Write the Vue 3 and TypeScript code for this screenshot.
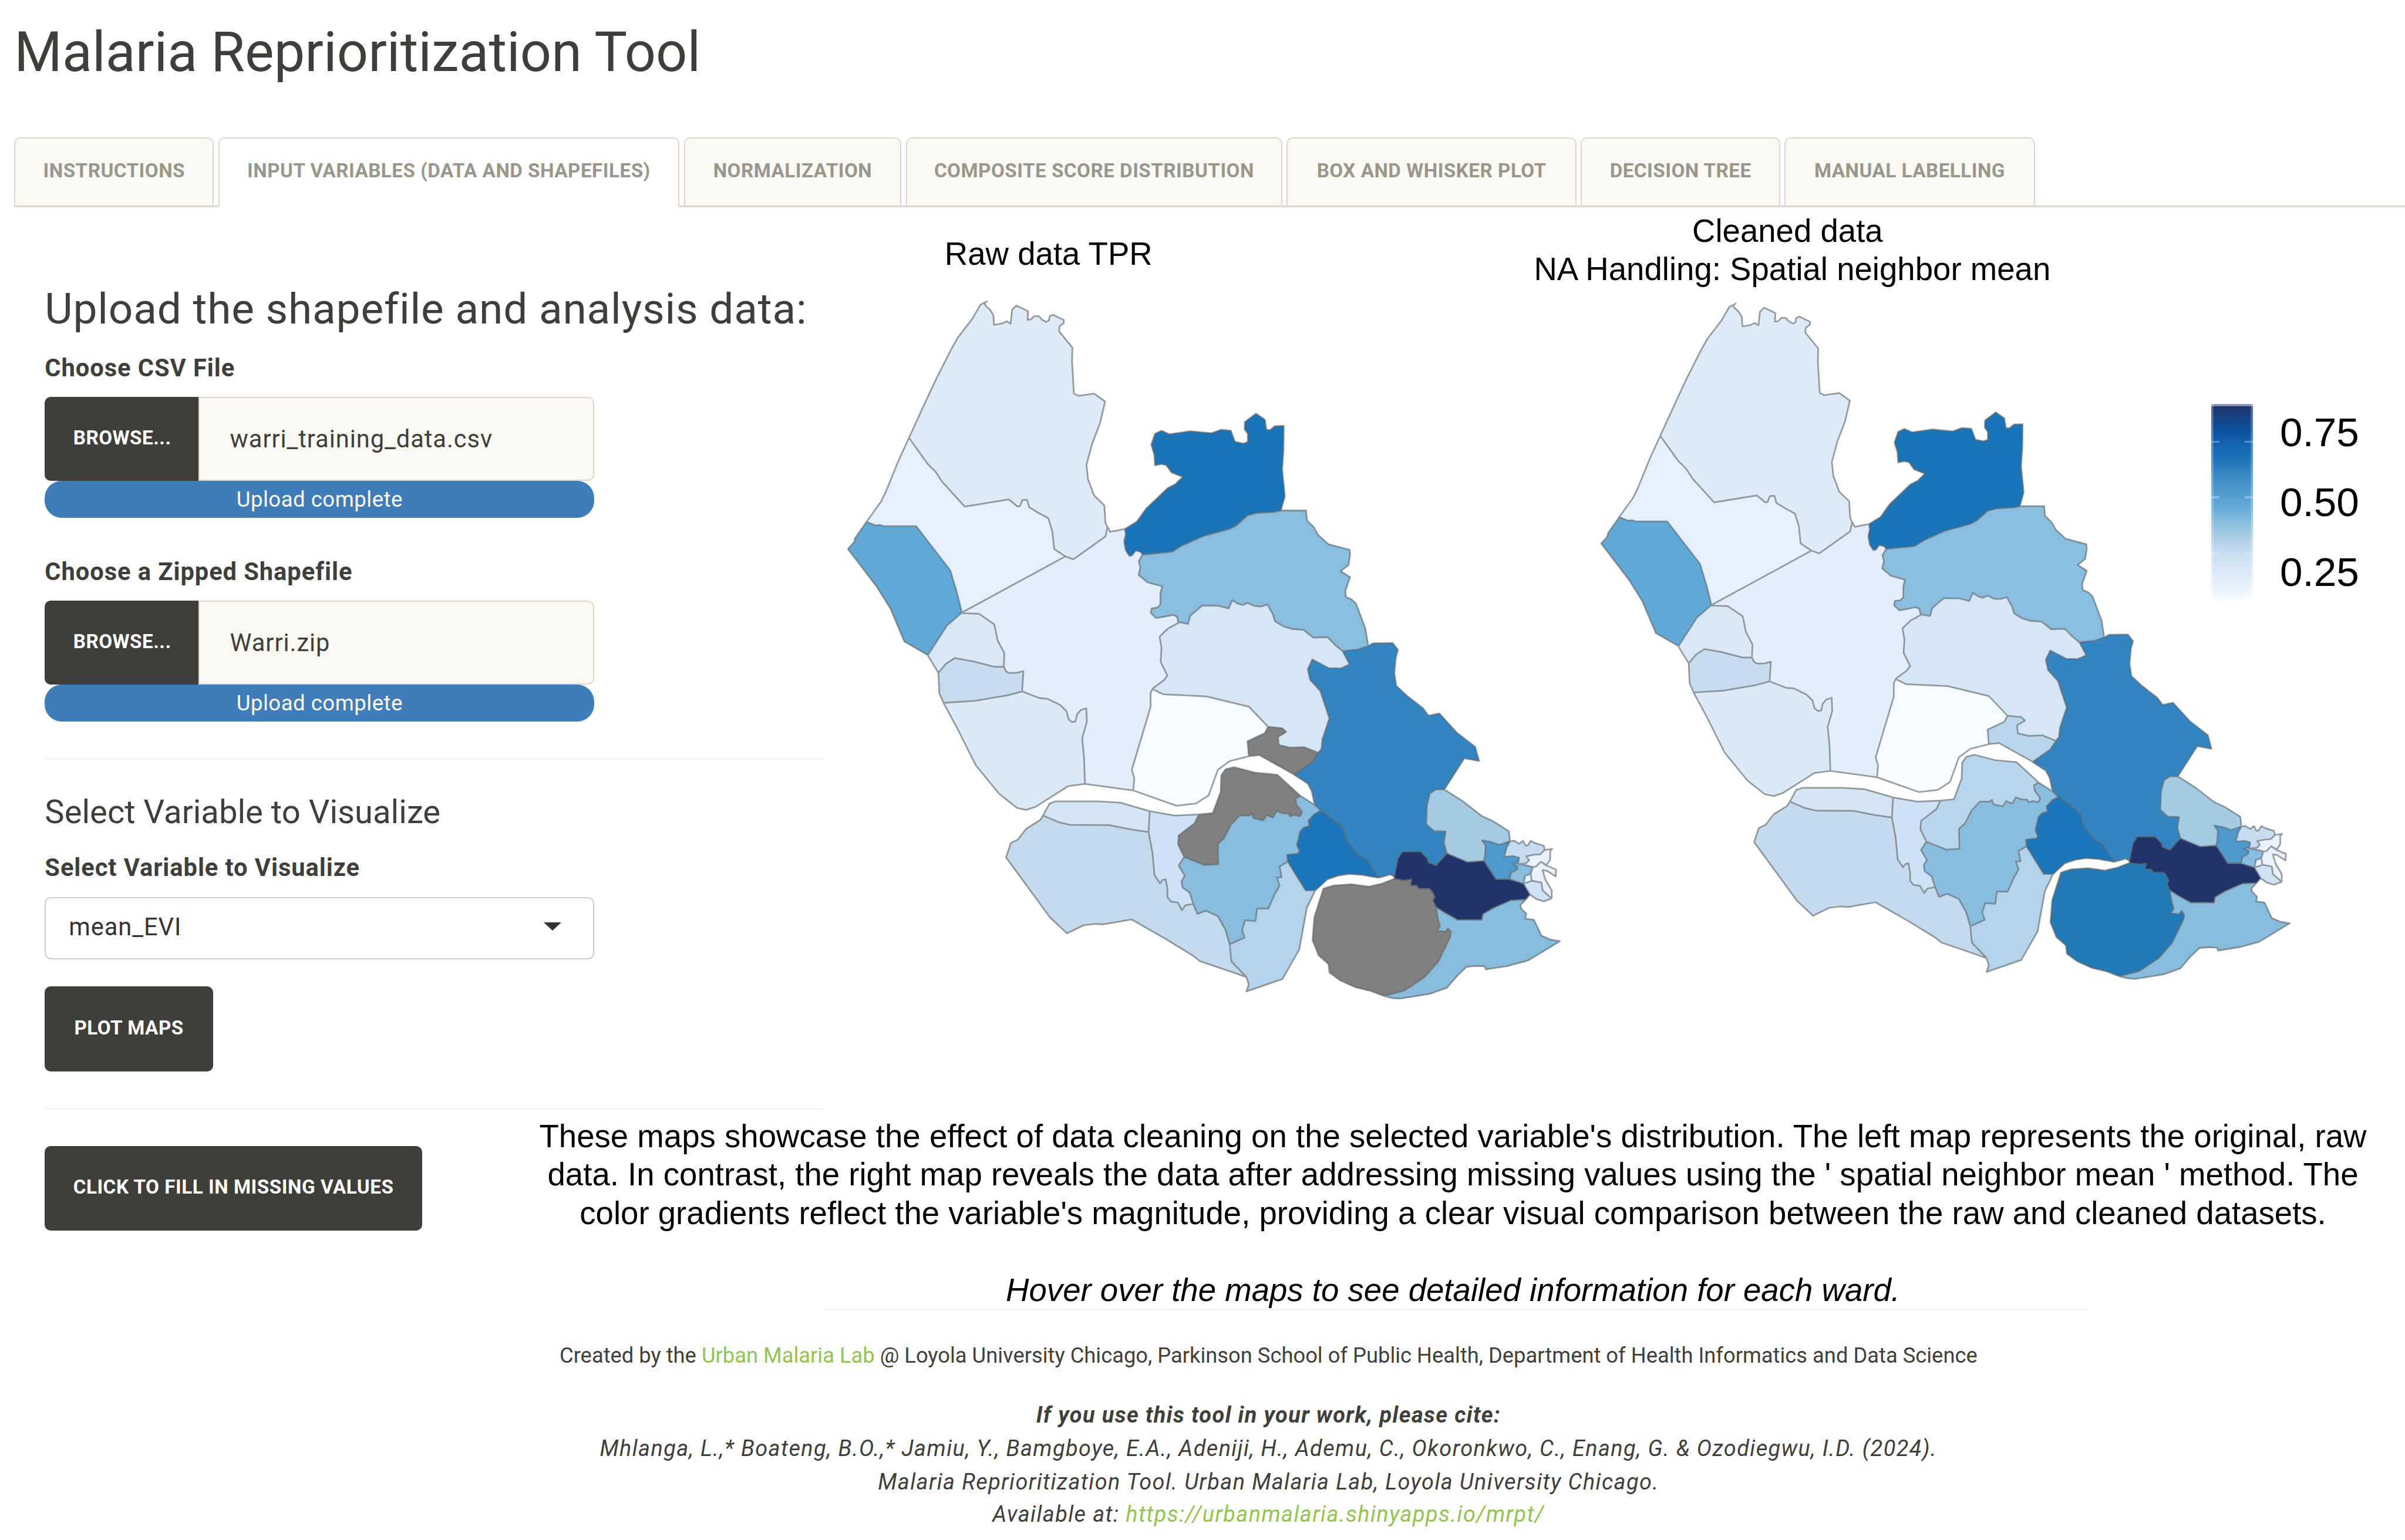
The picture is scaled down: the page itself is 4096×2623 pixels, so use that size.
<script setup lang="ts">
interface Sheet { x: number; y: number; sx: number; sy: number }
interface Ward { arcs: string; raw: string; cleaned?: string }

const tabs = [
  { label: 'Instructions', width: 36.3 },
  { label: 'Input variables (data and shapefiles)', width: 83.9, active: true },
  { label: 'Normalization', width: 39.6 },
  { label: 'Composite score distribution', width: 68.5 },
  { label: 'Box and whisker plot', width: 52.7 },
  { label: 'Decision tree', width: 36.3 },
  { label: 'Manual labelling', width: 45.5 },
]

const uploads = [
  { label: 'Choose CSV File', file: 'warri_training_data.csv' },
  { label: 'Choose a Zipped Shapefile', file: 'Warri.zip' },
]

const legend = ['0.75', '0.50', '0.25']

// The ward boundaries are digitised on four overlapping sheets.
const sheets: Record<string, Sheet> = {
  A: { x: 1520, y: 520, sx: 2.0632, sy: 2.24 },
  B: { x: 2000, y: 700, sx: 2.0632, sy: 2.24 },
  C: { x: 1660, y: 1060, sx: 1.96, sy: 2.0103 },
  D: { x: 2260, y: 1140, sx: 2.529, sy: 2.24 },
}

// Every boundary arc is stored once and shared by the wards on its two sides.
const arcSource: Record<string, string> = {
  a1: 'A 275,620 330,490 378,378 432,262 458,212 512,136 543,78 568,64 558,70 563,82 578,96 592,120 594,160 625,154 642,145 656,155 662,98 678,81 722,104 720,139 732,138 745,124 762,124 774,138 790,148 800,142 803,124 816,119 856,140 856,152 840,166 838,186 888,252 887,310 894,440 912,449 970,440 1011,472 992,560 962,645 941,730 947,790 970,855 1008,895 1012,965 1020,985',
  a2: 'A 1020,985 1012,1022 892,1115 862,1103',
  a3: 'A 862,1103 820,1073 813,1000 798,948 760,925 726,903 718,872 700,874 692,898 683,900 650,871 484,900 400,800 375,758 345,726 275,620',
  a4: 'A 275,620 235,715 190,835 170,880 116,962',
  a5: 'A 116,962 150,977 166,975 180,980 302,980 430,1160 455,1250 474,1332',
  a6: 'A 474,1332 862,1103',
  a7: 'A 116,962 72,1030 70,1044 46,1073 155,1228 205,1315 258,1450 346,1505',
  a8: 'A 474,1332 418,1384 346,1505',
  a9: 'C 176,112 236,114 291,153 303,212 327,258 325,308',
  a10: 'C 325,308 290,308 215,288 150,276 118,298 92,330',
  a11: 'C 54,267 92,330',
  a12: 'C 325,308 333,325 345,331 372,330 395,324 390,398',
  a13: 'C 390,398 340,412 220,433 110,440',
  a14: 'C 92,330 95,405 110,440',
  a15: 'C 390,398 450,422 480,425 525,447 548,470 556,500 568,510 580,508 586,482 600,466 619,460 621,510 604,570 611,640 614,736',
  a16: 'C 110,440 160,535 225,668 308,772 372,824 405,831 438,820 555,744 614,736',
  a17: 'C 614,736 786,760',
  a18: 'C 786,760 790,715 781,685 848,455 848,405 855,388',
  a19: 'C 855,388 895,358 908,340 884,290 887,240 880,198 910,168 948,147',
  a20: 'B 295,968 290,945 275,938 245,945 212,951 192,930 195,912 218,908 228,895 228,850 235,822 180,806 146,775 153,745 147,720 161,693',
  a21: 'B 161,693 155,682 135,676 122,695 112,698 98,675 92,640 98,610 95,588',
  a22: 'B 95,588 40,600 30,580',
  a23: 'B 95,588 140,558 175,505 255,422 285,405 312,376 270,358 250,328 232,324 208,329 205,285 194,245 208,200 232,188 262,202 340,190 420,198 455,184 492,187 508,233 540,240 556,233 556,200 544,182 545,152 587,118 620,143 626,184 640,185 658,169 691,168 690,270 685,345 695,455 680,513',
  a24: 'B 680,513 655,519 590,523 555,533 515,572 490,587 390,617 310,655 272,681 161,693',
  a25: 'B 680,513 775,513 778,553 805,583 820,612 858,650 938,673 940,692 934,735 905,760 940,785 922,840 924,865 945,875 962,892 997,992 1008,1065',
  a26: 'B 1008,1065 970,1079 912,1086',
  a27: 'B 912,1086 885,1062 855,1029 802,1031 765,999 722,996 690,985 658,964 650,935 630,896 605,904 580,902 555,889 538,898 520,893 498,878 484,912 445,901 385,900 340,942 332,975 295,968',
  a28: 'B 912,1086 938,1140 905,1156 860,1155 798,1120 781,1160 790,1203 828,1248 862,1360 836,1445 832,1485 820,1500',
  a29: 'B 820,1500 768,1477 715,1479 672,1468 670,1435 700,1415 685,1400 632,1394',
  a30: 'B 632,1394 560,1312 400,1270 240,1262 197,1240',
  a31: 'B 632,1394 620,1420 555,1453 560,1515',
  a32: 'C 1198,635 1130,653 1088,685 1055,778 1010,808 940,816 786,760',
  a33: 'C 1198,635 1236,631 1360,702',
  a34: 'C 1360,702 1425,655 1445,624',
  a35: 'D 237,604 300,640 318,670 332,727',
  a36: 'D 332,727 360,750',
  a37: 'D 360,750 430,795 466,825 476,868 530,930 570,950 625,1024',
  a38: 'D 625,1024 680,1010 698,1020',
  a39: 'D 698,1020 715,945 735,918 820,918 850,945 855,962 890,974 940,925',
  a40: 'D 940,925 926,880 934,835 880,833 845,805 848,730 862,680 890,664 928,664',
  a41: 'D 578,80 600,68 690,67 715,95 705,125 698,190 707,242 760,285 830,333 855,363 905,354 985,432 1070,490 1088,548 1020,537 928,664',
  a42: 'D 928,664 1010,710 1100,772 1150,792 1225,834 1230,875',
  a43: 'D 1230,875 1180,890 1145,878 1102,871 1118,892 1115,935 1110,955',
  a44: 'D 940,925 1035,960 1110,955',
  a45: 'D 1110,955 1165,1030 1228,1030',
  a46: 'D 1228,1030 1292,1048',
  a47: 'D 1292,1048 1322,1092',
  a48: 'D 1322,1092 1303,1112',
  a49: 'D 1303,1112 1235,1115 1150,1148 1105,1172 1100,1195 990,1195 935,1168 890,1143',
  a50: 'D 890,1143 876,1115 885,1103 872,1080 860,1068 835,1068 812,1068 800,1055 772,1055 778,1030 745,1034 698,1028 698,1020',
  a51: 'D 698,1020 698,1028 640,1048 580,1060 500,1050 420,1055 372,1068 330,1185 322,1278 350,1340 395,1375 400,1410 450,1442 520,1470 590,1485 650,1505',
  a52: 'D 650,1505 745,1483 835,1430 900,1365 955,1265 958,1245 945,1230 935,1243 895,1240 908,1220 898,1190 890,1143',
  a53: 'D 1303,1112 1278,1135 1282,1150 1305,1170 1300,1190 1340,1195 1375,1260 1415,1275 1460,1282 1315,1360 1220,1383 1118,1397 1115,1385 1070,1383 1030,1387 990,1420 940,1472 860,1497 725,1516 690,1514 650,1505',
  a54: 'D 625,1024 550,1012 490,1008 440,1015 390,1030 335,1075',
  a55: 'D 335,1075 290,1075 208,958',
  a56: 'D 208,958 205,930 255,925 262,915 250,890 265,835 280,820 308,812 303,790 330,765 360,750',
  a57: 'C 1337,1021 1308,1038 1315,1078 1298,1078 1308,1108 1290,1140 1268,1192 1228,1192 1222,1238 1185,1235 1174,1270 1183,1298 1130,1323',
  a58: 'C 1130,1323 1115,1270 1088,1220 1045,1200 1015,1212 1000,1175',
  a59: 'C 1000,1175 988,1135 962,1115 958,1092 970,1072 948,1035 968,1003',
  a60: 'C 968,1003 1040,1033 1090,1030 1088,955 1110,935 1135,885 1165,852 1200,852 1210,845 1215,862 1250,870 1262,850 1285,860 1298,835 1320,844 1340,845 1345,855 1360,850 1380,855 1388,840 1368,812 1365,790 1382,780',
  a61: 'C 1382,780 1433,813',
  a62: 'C 1382,780 1300,703 1220,695 1145,675 1115,683 1100,705 1098,765 1070,843 1020,848',
  a63: 'C 1020,848 1005,880 948,925 946,958 968,1003',
  a64: 'C 1020,848 935,852 845,836',
  a65: 'C 845,836 841,912',
  a66: 'C 841,912 855,990 862,1070 882,1100 890,1088 902,1085 908,1120 908,1150 920,1166 945,1170 960,1198 972,1180 1000,1175',
  a67: 'C 845,836 740,805 660,800 510,800 488,808 465,852',
  a68: 'C 465,852 520,876 560,886 700,887 780,903 841,912',
  a69: 'C 465,852 455,868 405,900 375,940 350,952 333,1005 490,1225 550,1283 610,1253 650,1248 680,1250 780,1232 900,1302 1000,1365 1025,1385 1140,1425 1190,1443',
  a70: 'C 1130,1323 1136,1385 1190,1443',
  a71: 'C 1190,1443 1198,1470 1190,1495 1318,1450 1378,1342 1405,1190 1435,1126',
  a72: 'D 1230,875 1215,900 1203,938 1245,935 1272,942 1268,962',
  a73: 'D 1268,962 1242,968 1265,978 1262,990 1235,1003 1228,1030',
  a74: 'D 1230,875 1250,873 1272,885 1290,873 1302,893 1312,892 1325,873 1345,882 1385,893 1390,910',
  a75: 'D 1390,910 1370,928 1340,930 1305,936 1318,952 1303,965 1268,967 1268,962',
  a76: 'D 1390,910 1424,906 1415,915 1415,950 1398,972 1372,958 1350,978 1335,980',
  a77: 'D 1335,980 1310,974 1268,967',
  a78: 'D 1335,980 1325,1008 1300,1015 1296,1032 1292,1048',
  a79: 'D 1335,980 1350,978 1372,958 1400,975 1442,990 1440,1018 1400,995 1380,992 1392,1030 1422,1075 1422,1108',
  a80: 'D 1422,1108 1380,1075 1375,1043 1330,1036 1292,1048',
  a81: 'D 1422,1108 1385,1120 1350,1110 1322,1092',
  a82: 'D 1325,1008 1330,1036',
}

const points = Object.fromEntries(
  Object.entries(arcSource).map(([name, source]) => {
    const [sheetName, ...pairs] = source.split(' ')
    const sheet = sheets[sheetName]
    return [
      name,
      pairs.map((pair) => {
        const [x, y] = pair.split(',').map(Number)
        return `${(sheet.x + x / sheet.sx).toFixed(1)} ${(sheet.y + y / sheet.sy).toFixed(1)}`
      }),
    ]
  }),
) as Record<string, string[]>

const wards: Ward[] = [
  { arcs: 'a1 a2 a3', raw: '#ddebf9' },
  { arcs: 'a4 a5 a6 a3', raw: '#e4f1fc' },
  { arcs: 'a7 -a8 -a5', raw: '#60a8d6' },
  { arcs: '-a6 a9 a12 a15 a17 a18 a19 a20 a21 a22 a2', raw: '#e2eefb' },
  { arcs: 'a8 a11 -a10 -a9', raw: '#d9e8f7' },
  { arcs: 'a10 a14 -a13 -a12', raw: '#c8dcf0' },
  { arcs: 'a13 a16 -a15', raw: '#daeaf8' },
  { arcs: 'a23 a24 a21', raw: '#1a74b8' },
  { arcs: 'a25 a26 a27 a20 -a24', raw: '#8abede' },
  { arcs: '-a27 a28 a29 a30 a19', raw: '#d5e6f6' },
  { arcs: '-a30 a31 a32 a18', raw: '#f6fcff' },
  { arcs: 'a31 a33 a34 a29', raw: '#7f807f', cleaned: '#b7d5ed' },
  { arcs: '-a62 -a60 -a63', raw: '#7f807f', cleaned: '#b7d5ed' },
  { arcs: 'a41 -a40 -a39 -a38 -a37 -a36 -a35 a34 -a28 -a26', raw: '#3385c2' },
  { arcs: 'a67 a68 -a65', raw: '#d4e6f6' },
  { arcs: 'a69 -a70 a58 -a66 -a68', raw: '#c4daef' },
  { arcs: 'a64 a65 a66 a59 -a63', raw: '#cfe1f4' },
  { arcs: 'a61 a36 -a56 a57 a58 a59 a60', raw: '#89bdde' },
  { arcs: 'a57 a70 a71 a55', raw: '#b3d3ea' },
  { arcs: 'a37 a54 a55 a56', raw: '#1c76bb' },
  { arcs: 'a51 a52 a50', raw: '#7f807f', cleaned: '#227ab9' },
  { arcs: 'a39 a44 a45 a46 a47 a48 a49 a50', raw: '#203369' },
  { arcs: 'a42 a43 -a44 a40', raw: '#a3cbe2' },
  { arcs: 'a53 a52 -a49', raw: '#87bcdd' },
  { arcs: 'a72 a73 -a45 -a43', raw: '#4e9acc' },
  { arcs: 'a74 a75 -a72', raw: '#c7dcf0' },
  { arcs: 'a76 a77 -a75', raw: '#e9f2fc' },
  { arcs: '-a77 a78 -a46 -a73', raw: '#89bdde' },
  { arcs: 'a79 a80 -a78', raw: '#e9f2fc' },
  { arcs: '-a80 a81 -a47', raw: '#cfe1f4' },
]

function wardPath(arcs: string): string {
  const ring: string[] = []
  let end = ''
  for (const ref of arcs.split(' ')) {
    let line = points[ref.replace('-', '')].slice()
    if (ref.startsWith('-')) line.reverse()
    // An arc that starts further from the current end than it finishes is walked backwards.
    if (end && distance(end, line[0]) > distance(end, line[line.length - 1])) line = line.reverse()
    ring.push(...line)
    end = line[line.length - 1]
  }
  return `M${ring.join('L')}Z`
}

function distance(a: string, b: string): number {
  const [ax, ay] = a.split(' ').map(Number)
  const [bx, by] = b.split(' ').map(Number)
  return Math.hypot(ax - bx, ay - by)
}

const shapes = wards.map((ward) => ({
  d: wardPath(ward.arcs),
  raw: ward.raw,
  cleaned: ward.cleaned ?? ward.raw,
}))
const borders = Object.values(points).map((line) => `M${line.join('L')}`).join('')
</script>

<template>
  <div class="page">
    <h1 class="title">Malaria Reprioritization Tool</h1>

    <nav class="tabs">
      <a
        v-for="tab in tabs"
        :key="tab.label"
        class="tab"
        :class="{ active: tab.active }"
        :style="{ width: tab.width + 'rem' }"
      >{{ tab.label }}</a>
    </nav>

    <section class="upper">
      <aside class="sidebar">
        <h2>Upload the shapefile and analysis data:</h2>
        <div v-for="item in uploads" :key="item.label" class="upload">
          <label class="label">{{ item.label }}</label>
          <div class="file">
            <span class="browse">Browse...</span>
            <span class="filename">{{ item.file }}</span>
          </div>
          <div class="progress">Upload complete</div>
        </div>
        <hr class="rule" />
        <h4>Select Variable to Visualize</h4>
        <label class="label select-label">Select Variable to Visualize</label>
        <div class="select"><span>mean_EVI</span><i class="caret"></i></div>
        <button class="btn plot">Plot maps</button>
        <hr class="rule" />
      </aside>

      <div class="plots">
        <figure class="raw">
          <figcaption>Raw data TPR</figcaption>
          <svg viewBox="1540 544 1300 1278" preserveAspectRatio="none">
            <path v-for="(shape, i) in shapes" :key="i" :d="shape.d" :fill="shape.raw" />
            <path class="border" :d="borders" />
          </svg>
        </figure>
        <figure class="cleaned">
          <figcaption><span class="first">Cleaned data</span><span>NA Handling: Spatial neighbor mean</span></figcaption>
          <svg viewBox="1540 544 1300 1278" preserveAspectRatio="none">
            <path v-for="(shape, i) in shapes" :key="i" :d="shape.d" :fill="shape.cleaned" />
            <path class="border" :d="borders" />
          </svg>
        </figure>
        <div class="legend">
          <div class="bar"><i></i><i></i><i></i></div>
          <div class="values"><span v-for="value in legend" :key="value">{{ value }}</span></div>
        </div>
      </div>
    </section>

    <section class="lower">
      <button class="btn fill">Click to fill in missing values</button>
      <p class="description">
        <span>These maps showcase the effect of data cleaning on the selected variable's distribution. The left map represents the original, raw</span>
        <span>data. In contrast, the right map reveals the data after addressing missing values using the ' spatial neighbor mean ' method. The</span>
        <span>color gradients reflect the variable's magnitude, providing a clear visual comparison between the raw and cleaned datasets.</span>
        <em>Hover over the maps to see detailed information for each ward.</em>
      </p>
    </section>

    <footer class="footer">
      <hr />
      <p class="created">Created by the <a>Urban Malaria Lab</a> @ Loyola University Chicago, Parkinson School of Public Health, Department of Health Informatics and Data Science</p>
      <div class="cite">
        <p class="lead">If you use this tool in your work, please cite:</p>
        <p class="authors">Mhlanga, L.,* Boateng, B.O.,* Jamiu, Y., Bamgboye, E.A., Adeniji, H., Ademu, C., Okoronkwo, C., Enang, G. &amp; Ozodiegwu, I.D. (2024).</p>
        <p class="work">Malaria Reprioritization Tool. Urban Malaria Lab, Loyola University Chicago.</p>
        <p class="url">Available at: <a>https://urbanmalaria.shinyapps.io/mrpt/</a></p>
      </div>
    </footer>
  </div>
</template>

<style>
html {
  font-size: 9.36443px;
}
body {
  margin: 0;
  background: #fff;
  overflow: hidden;
}
</style>

<style scoped>
.page {
  width: 437.4rem;
  height: 280.1rem;
  overflow: hidden;
  background: #fff;
  color: #3e3f3a;
  font-family: Roboto, sans-serif;
}
h1, h2, h4, p, figure, hr {
  margin: 0;
  font-weight: 400;
}
.title {
  height: 20.95rem;
  padding: 4.05rem 0 0 2.6rem;
  font-size: 10rem;
  line-height: 11rem;
  white-space: nowrap;
}
.tabs {
  display: flex;
  gap: 0.78rem;
  height: 12.65rem;
  margin-left: 2.6rem;
  box-shadow: inset 0 -0.34rem #dfd7ca;
}
.tab {
  box-sizing: border-box;
  flex: none;
  height: 12.65rem;
  border: 0.3rem solid #dfd7ca;
  border-bottom-width: 0.34rem;
  border-radius: 1.1rem 1.1rem 0 0;
  background: #fbf9f4;
  color: #98978b;
  font-size: 3.55rem;
  font-weight: 700;
  letter-spacing: 0.05rem;
  line-height: 11.7rem;
  text-align: center;
  text-transform: uppercase;
  white-space: nowrap;
}
.tab.active {
  background: #fff;
  border-bottom-color: #fff;
}
.upper {
  display: flex;
  height: 164.3rem;
}
.sidebar {
  display: flex;
  flex-direction: column;
  flex: none;
  box-sizing: border-box;
  width: 149.8rem;
  padding-left: 8.15rem;
}
h2 {
  margin-top: 14.2rem;
  font-size: 7.8rem;
  letter-spacing: 0.083rem;
  line-height: 8.6rem;
  white-space: nowrap;
}
.upload {
  width: 99.95rem;
  margin-top: 3.4rem;
}
.upload + .upload {
  margin-top: 6.7rem;
}
.label {
  display: block;
  font-size: 4.45rem;
  font-weight: 700;
  letter-spacing: 0.1rem;
  line-height: 6.2rem;
}
.file {
  display: flex;
  box-sizing: border-box;
  height: 15.33rem;
  margin-top: 2.13rem;
  border-radius: 1.1rem;
  overflow: hidden;
}
.browse {
  flex: none;
  width: 27.95rem;
  background: #3e3f3a;
  color: #fff;
  font-size: 3.55rem;
  font-weight: 700;
  letter-spacing: 0.05rem;
  line-height: 15rem;
  text-align: center;
  text-indent: 0.2rem;
  text-transform: uppercase;
}
.filename {
  flex: 1;
  box-sizing: border-box;
  padding-left: 5.5rem;
  border: 0.3rem solid #dfd7ca;
  border-radius: 0 1.1rem 1.1rem 0;
  background: #fbf9f4;
  font-size: 4.45rem;
  letter-spacing: 0.1rem;
  line-height: 15rem;
}
.progress {
  height: 6.67rem;
  border-radius: 3.1rem;
  background: #3f7cba;
  color: #fff;
  font-size: 3.9rem;
  letter-spacing: 0.055rem;
  line-height: 6.8rem;
  text-align: center;
}
.rule {
  flex: none;
  height: 0.34rem;
  margin-top: 6.65rem;
  border: 0;
  background: #f8f5f0;
}
h4 {
  margin-top: 6.27rem;
  font-size: 6rem;
  line-height: 6.6rem;
}
.select-label {
  margin-top: 3.7rem;
}
.select {
  display: flex;
  align-items: center;
  justify-content: space-between;
  box-sizing: border-box;
  width: 99.95rem;
  height: 11.32rem;
  margin-top: 2.17rem;
  padding: 0 5.85rem 0.5rem 4.15rem;
  border: 0.3rem solid #ccc;
  border-radius: 1.1rem;
  color: #333;
  font-size: 4.45rem;
  letter-spacing: 0.1rem;
}
.caret {
  border: 1.7rem solid transparent;
  border-top: 1.6rem solid #333;
  border-bottom: 0;
}
.btn {
  flex: none;
  box-sizing: border-box;
  height: 15.43rem;
  padding: 0 0 0.5rem;
  border: 0;
  border-radius: 1.1rem;
  background: #3e3f3a;
  color: #fff;
  font: 700 3.55rem Roboto, sans-serif;
  letter-spacing: 0.055rem;
  text-transform: uppercase;
  white-space: nowrap;
}
.plot {
  width: 30.6rem;
  margin-top: 5rem;
}
.plots {
  position: relative;
  display: flex;
  align-items: flex-start;
  color: #000;
  font-family: "Liberation Sans", Arial, sans-serif;
  font-size: 5.83rem;
  line-height: 7rem;
}
.plots svg {
  display: block;
}
.border {
  fill: none;
  stroke: #5e6264;
  stroke-opacity: 0.62;
  stroke-width: 3;
  stroke-linejoin: round;
}
.raw {
  width: 130rem;
  margin: 5.1rem 0 0 4.2rem;
}
.raw figcaption {
  width: 73.4rem;
  height: 11.6rem;
  text-align: center;
}
.raw svg {
  width: 130rem;
  height: 127.8rem;
}
.cleaned {
  width: 125.7rem;
  margin: 0.85rem 0 0 7rem;
}
.cleaned figcaption {
  width: 98rem;
  height: 16.31rem;
  margin-left: -14.05rem;
  text-align: center;
}
.cleaned figcaption span {
  display: block;
  white-space: nowrap;
}
.cleaned figcaption .first {
  padding-right: 1.7rem;
}
.cleaned svg {
  width: 125.7rem;
  height: 123.77rem;
}
.legend {
  position: absolute;
  top: 35.8rem;
  left: 252.4rem;
  display: flex;
}
.bar {
  position: relative;
  box-sizing: border-box;
  width: 7.5rem;
  height: 36.3rem;
  background: linear-gradient(#213468 0%, #1b3f80 6%, #0b519d 13%, #1463ae 20%, #1a73b9 27%, #3787c3 35%, #4d99cd 43%, #60a8d6 51%, #83badc 58%, #a3cbe3 65%, #c4daef 73%, #d5e5f5 81%, #e3effa 89%, #f7fcff 98%, #fff 100%);
  box-shadow: inset 0 0.4rem rgba(255, 255, 255, 0.5), inset 0.4rem 0 rgba(255, 255, 255, 0.25), inset -0.4rem 0 rgba(255, 255, 255, 0.25);
}
.bar i {
  position: absolute;
  top: 6.7rem;
  left: 0;
  box-sizing: border-box;
  width: 7.5rem;
  height: 0.4rem;
  border: solid rgba(255, 255, 255, 0.3);
  border-width: 0 1.5rem;
}
.bar i:nth-child(2) {
  top: 16.8rem;
}
.bar i:nth-child(3) {
  top: 27rem;
}
.values {
  display: flex;
  flex-direction: column;
  margin: -1.15rem 0 0 4.95rem;
  font-size: 7.4rem;
  line-height: 12.7rem;
}
.lower {
  display: flex;
  align-items: flex-start;
  height: 36.1rem;
}
.fill {
  width: 68.6rem;
  margin: 6.5rem 0 0 8.15rem;
}
.description {
  flex: 1;
  margin: 1.25rem 0 0 14.35rem;
  color: #000;
  font-family: "Liberation Sans", Arial, sans-serif;
  font-size: 5.83rem;
  line-height: 7rem;
  text-align: center;
}
.description span,
.description em {
  display: block;
  white-space: nowrap;
}
.description em {
  margin-top: 7rem;
}
.footer {
  width: 230.2rem;
  margin-left: 149.8rem;
  font-size: 3.88rem;
}
.footer hr {
  height: 0.35rem;
  border: 0;
  background: #f8f5f0;
}
.footer p {
  width: 300rem;
  margin-left: -69.1rem;
  line-height: 6.1rem;
  text-align: center;
  white-space: nowrap;
}
.footer a {
  color: #93c54b;
}
.footer .created {
  margin-top: 5.1rem;
}
.cite {
  margin-top: 4.75rem;
  font-size: 4.05rem;
  font-style: italic;
  letter-spacing: 0.15rem;
}
.footer .lead {
  font-weight: 700;
}
.footer .url {
  margin-top: -0.2rem;
}
</style>
